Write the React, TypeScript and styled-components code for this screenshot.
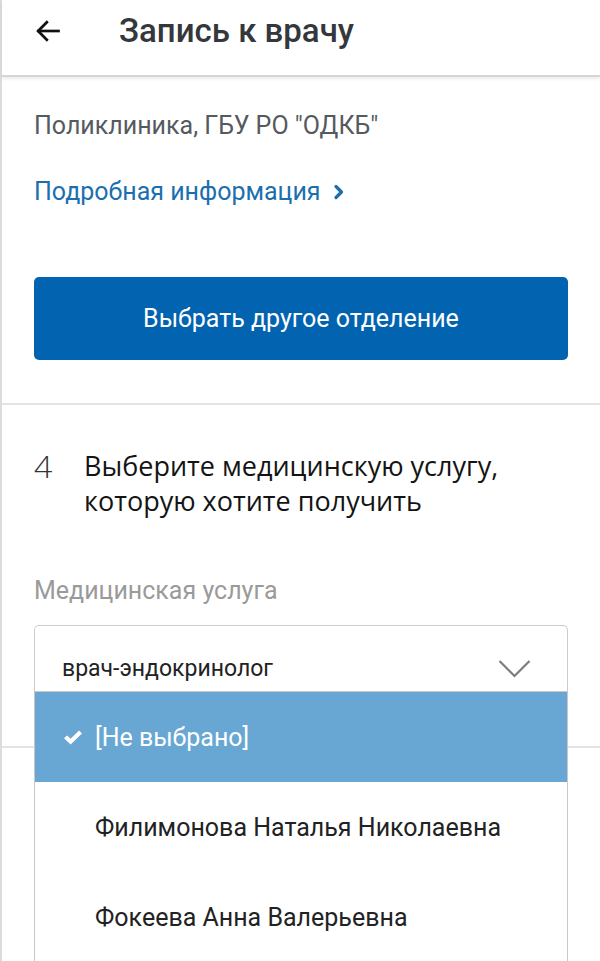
import React from "react";
import styled, { createGlobalStyle } from "styled-components";

const Global = createGlobalStyle`
  html, body {
    margin: 0;
    padding: 0;
    background: #ffffff;
    overflow: hidden;
  }
  * { box-sizing: border-box; }
`;

const Page = styled.div`
  width: 600px;
  min-height: 961px;
  border-left: 2px solid #dcdcdc;
  font-family: Roboto, "Liberation Sans", sans-serif;
  background: #fff;
`;

const Header = styled.header`
  height: 77px;
  display: flex;
  align-items: center;
  padding-left: 31px;
  padding-bottom: 14px;
  border-bottom: 2px solid #d6d6d6;
  box-shadow: 0 2px 3px rgba(0, 0, 0, 0.08);
`;

const BackButton = styled.button`
  width: 30px;
  height: 30px;
  padding: 0;
  border: none;
  background: none;
  display: flex;
  align-items: center;
  justify-content: center;
  margin-right: 56px;
`;

const Title = styled.h1`
  margin: 0;
  font-size: 33px;
  font-weight: 500;
  color: #34373b;
`;

const Section = styled.section<{ $pt: number; $pb: number }>`
  padding: ${(p) => p.$pt}px 32px ${(p) => p.$pb}px;
  border-bottom: 2px solid #e4e4e4;
`;

const Clinic = styled.div`
  font-size: 25px;
  color: #555a5f;
  line-height: 26px;
`;

const LinkRow = styled.div`
  margin-top: 40px;
  height: 26px;
`;

const InfoLink = styled.a`
  display: inline-flex;
  align-items: center;
  gap: 12px;
  font-size: 25px;
  line-height: 26px;
  color: #1b6fae;
  text-decoration: none;
`;

const PrimaryButton = styled.button`
  display: block;
  width: 100%;
  height: 83px;
  margin-top: 72px;
  border: none;
  border-radius: 5px;
  background: #0263b1;
  color: #ffffff;
  font-family: Roboto, "Liberation Sans", sans-serif;
  font-size: 25px;
`;

const StepRow = styled.div`
  display: flex;
  align-items: flex-start;
`;

const StepNumber = styled.span`
  width: 50px;
  font-family: "Open Sans", sans-serif;
  font-weight: 300;
  font-size: 32px;
  line-height: 36px;
  color: #333;
`;

const StepText = styled.h2`
  margin: 0;
  font-family: "Open Sans", sans-serif;
  font-weight: 400;
  font-size: 27px;
  line-height: 35px;
  color: #141414;
`;

const FieldLabel = styled.div`
  margin-top: 60px;
  font-size: 25px;
  line-height: 26px;
  color: #9a9a9a;
`;

const SelectWrap = styled.div`
  position: relative;
  margin-top: 21px;
`;

const SelectBox = styled.div`
  height: 66px;
  border: 1px solid #cccccc;
  border-bottom: none;
  border-radius: 5px 5px 0 0;
  display: flex;
  align-items: center;
  justify-content: space-between;
  padding: 20px 36px 0 27px;
  font-size: 23px;
  color: #222;
`;

const Options = styled.ul`
  position: absolute;
  top: 100%;
  left: 0;
  right: 0;
  margin: 0;
  padding: 0;
  list-style: none;
  background: #fff;
  border-left: 1px solid #c8c8c8;
  border-right: 1px solid #c8c8c8;
  border-top: 1px solid #c8c8c8;
`;

const Option = styled.li<{ $selected?: boolean }>`
  height: 90px;
  display: flex;
  align-items: center;
  padding-left: 28px;
  gap: 12px;
  font-size: 25px;
  background: ${(p) => (p.$selected ? "#68a7d4" : "#fff")};
  color: ${(p) => (p.$selected ? "#fff" : "#222")};
`;

const CheckSlot = styled.span`
  width: 20px;
  display: flex;
  justify-content: center;
`;

const ArrowLeft = () => (
  <svg width="28" height="28" viewBox="0 0 24 24" fill="none" stroke="#111" strokeWidth="2.3" strokeLinecap="square">
    <path d="M21 12H4" />
    <path d="M11 4.5L3.5 12L11 19.5" />
  </svg>
);

const ChevronRight = () => (
  <svg width="12" height="16" viewBox="0 0 12 16" fill="none" stroke="#1b6fae" strokeWidth="3.2" strokeLinecap="round" strokeLinejoin="round">
    <path d="M3 2.5L8.5 8L3 13.5" />
  </svg>
);

const ChevronDown = () => (
  <svg width="33" height="20" viewBox="0 0 33 20" fill="none" stroke="#7d7d7d" strokeWidth="2.2">
    <path d="M1.5 2L16.5 17L31.5 2" />
  </svg>
);

const Check = () => (
  <svg width="20" height="16" viewBox="0 0 20 16" fill="#fff">
    <path d="M1 9.2L4 6.4L7.6 9.8L16 1.6L19 4.5L7.6 15.6Z" />
  </svg>
);

const doctors = ["Филимонова Наталья Николаевна", "Фокеева Анна Валерьевна"];

export default function App() {
  return (
    <>
      <Global />
      <Page>
        <Header>
          <BackButton aria-label="Назад">
            <ArrowLeft />
          </BackButton>
          <Title>Запись к врачу</Title>
        </Header>

        <Section $pt={36} $pb={43}>
          <Clinic>Поликлиника, ГБУ РО "ОДКБ"</Clinic>
          <LinkRow>
            <InfoLink href="#">
              Подробная информация <ChevronRight />
            </InfoLink>
          </LinkRow>
          <PrimaryButton>Выбрать другое отделение</PrimaryButton>
        </Section>

        <Section $pt={43} $pb={55}>
          <StepRow>
            <StepNumber>4</StepNumber>
            <StepText>
              Выберите медицинскую услугу,
              <br />
              которую хотите получить
            </StepText>
          </StepRow>
          <FieldLabel>Медицинская услуга</FieldLabel>
          <SelectWrap>
            <SelectBox>
              <span>врач-эндокринолог</span>
              <ChevronDown />
            </SelectBox>
            <Options>
              <Option $selected>
                <CheckSlot>
                  <Check />
                </CheckSlot>
                [Не выбрано]
              </Option>
              {doctors.map((d) => (
                <Option key={d}>
                  <CheckSlot />
                  {d}
                </Option>
              ))}
            </Options>
          </SelectWrap>
        </Section>
      </Page>
    </>
  );
}
